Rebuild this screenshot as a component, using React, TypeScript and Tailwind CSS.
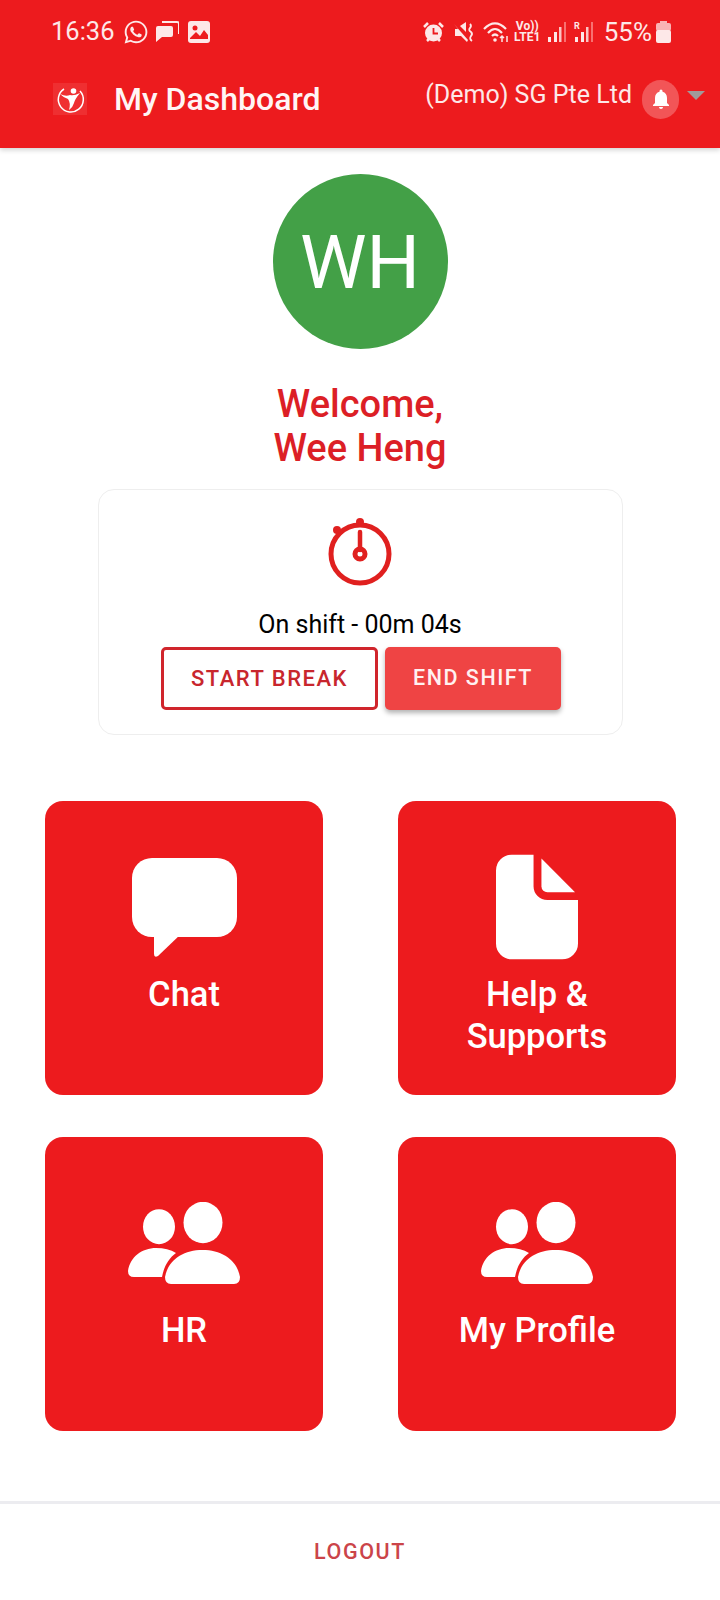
import { FaWhatsapp } from "react-icons/fa";

const roboto = "font-['Roboto',sans-serif]";

const ChatIcon = () => (
  <svg width="105" height="99" viewBox="0 0 105 99" fill="#fff">
    <rect width="105" height="79" rx="20" />
    <path d="M22 75V96q0 4 4 2L50 75Z" />
  </svg>
);

const DocIcon = () => (
  <svg width="82" height="106" viewBox="0 0 83 106" fill="#fff">
    <path d="M16 0H38V32a14 14 0 0 0 14 14H83V90a16 16 0 0 1-16 16H16a16 16 0 0 1-16-16V16A16 16 0 0 1 16 0Z" />
    <path d="M46 4L80 38H52a6 6 0 0 1-6-6Z" />
  </svg>
);

const PeopleIcon = () => (
  <svg width="112" height="82" viewBox="0 0 112 82" fill="#fff">
    <ellipse cx="31" cy="24.7" rx="16" ry="17.5" />
    <ellipse cx="75" cy="20.5" rx="19.5" ry="20.7" />
    <path d="M37 75C40 58 55 48 74.500 48S109 58 112 75Q112 82 106 82H43Q37 82 37 75Z" />
    <path d="M0 69C2 55 14 46 28 46Q40 46 48 51C41 56 36 64 34 75H6Q0 75 0 69Z" />
  </svg>
);

const Stopwatch = () => (
  <svg width="70" height="72" viewBox="0 0 70 72" fill="none" stroke="#e0201f">
    <circle cx="35" cy="38" r="29" strokeWidth="5" />
    <circle cx="35" cy="6" r="4" fill="#e0201f" stroke="none" />
    <circle cx="12" cy="14" r="4" fill="#e0201f" stroke="none" />
    <path d="M35 16V34" strokeWidth="4.500" strokeLinecap="round" />
    <circle cx="35" cy="38" r="5" strokeWidth="5" />
  </svg>
);

const Logo = () => (
  <div className="w-[34px] h-[32px] bg-[#ef2f31] flex items-center justify-center">
    <svg width="30" height="30" viewBox="0 0 30 30" fill="none" stroke="#fff">
      <path d="M9 5A12.500 12.500 0 1 0 25 7" strokeWidth="1.500" />
      <circle cx="18.500" cy="7" r="2.800" fill="#fff" stroke="none" />
      <path d="M5 10Q11 13 15 11Q19 12 25 9Q20 15 19 19Q18 23 14 26Q16 19 13 15Q9 14 5 10Z" fill="#fff" stroke="none" />
    </svg>
  </div>
);

const StatusLeft = () => (
  <div className="flex items-center">
    <span className="text-[25.500px] leading-none text-[#fde8e8] w-[72px]">16:36</span>
    <FaWhatsapp className="text-[#fde8e8] w-[26px] h-[26px]" />
    <svg className="ml-[7px]" width="23" height="22" viewBox="0 0 23 22" fill="#fde8e8">
      <path d="M2 5H15Q17 5 17 7V14Q17 16 15 16H6L0 21V7Q0 5 2 5Z" />
      <path d="M6 1H21Q23 1 23 3V13" fill="none" stroke="#fde8e8" strokeWidth="2" />
    </svg>
    <svg className="ml-[9px]" width="22" height="22" viewBox="0 0 22 22">
      <rect width="22" height="22" rx="3" fill="#fde8e8" />
      <circle cx="7" cy="7" r="2.500" fill="#ed1b1e" />
      <path d="M2 17L8 11L12 15L16 9L20 14V18H2Z" fill="#ed1b1e" />
    </svg>
  </div>
);

const Signal = ({ roaming }: { roaming?: boolean }) => (
  <svg width="21" height="22" viewBox="0 0 21 22">
    {roaming && <text x="1" y="8" fontSize="9" fontWeight="700" fill="#fde8e8" fontFamily="Roboto">R</text>}
    <rect x="2" y="16" width="3" height="5" fill="#fde8e8" />
    <rect x="8" y="11" width="3" height="10" fill="#fde8e8" />
    <rect x="13" y="6" width="2.500" height="15" fill="#fbc4c4" />
    <rect x="18" y="1" width="2" height="20" fill="#f87171" />
  </svg>
);

const StatusRight = () => (
  <div className="flex items-center text-[#fde8e8]">
    <svg width="21" height="22" viewBox="0 0 21 22">
      <circle cx="10.500" cy="12" r="8.500" fill="#fde8e8" />
      <path d="M1 6L5 2M20 6L16 2M4 20L6 18M17 20L15 18" stroke="#fde8e8" strokeWidth="2.500" />
      <path d="M10.500 7V12.500H15" fill="none" stroke="#ed1b1e" strokeWidth="1.800" />
    </svg>
    <svg className="ml-[9px]" width="22" height="22" viewBox="0 0 22 22" fill="#fde8e8">
      <path d="M1 3L15 19L14 21L8 15H2V8H5Z" />
      <path d="M7 5L13 1V11Z" />
      <path d="M17 3Q19 5 17 7Q15 9 18 11Q20 13 18 15Q16 18 19 20" fill="none" stroke="#fde8e8" strokeWidth="1.800" />
    </svg>
    <svg className="ml-[8px]" width="28" height="22" viewBox="0 0 28 22" fill="none" stroke="#fde8e8" strokeWidth="2.200">
      <path d="M1 8Q12 -3 23 8" />
      <path d="M5 12Q12 4 19 12" />
      <path d="M9 15Q12 12 15 15" />
      <circle cx="12" cy="19" r="1.800" fill="#fde8e8" stroke="none" />
      <path d="M19 21V15M17 17L19 15L21 17M24 15V21" strokeWidth="1.500" />
    </svg>
    <div className="ml-[3px] w-[27px] flex flex-col items-center text-[12px] leading-[11px] font-bold">
      <span>Vo))</span>
      <span>LTE1</span>
    </div>
    <div className="ml-[5px]"><Signal /></div>
    <div className="ml-[6px]"><Signal roaming /></div>
    <span className="ml-[10px] text-[26px] leading-none">55%</span>
    <svg className="ml-[4px]" width="15" height="22" viewBox="0 0 15 22">
      <rect x="4" y="0" width="7" height="3" fill="#f9b4b4" />
      <rect x="0" y="2" width="15" height="8" rx="2" fill="#f9b4b4" />
      <rect x="0" y="9" width="15" height="13" rx="2" fill="#fde8e8" />
    </svg>
  </div>
);

const Tile = ({ icon, label }: { icon: React.ReactNode; label: React.ReactNode }) => (
  <div className="h-[294px] rounded-[18px] bg-[#ed1b1e] flex flex-col items-center pt-[40px]">
    <div className="h-[132px] flex items-center justify-center">{icon}</div>
    <p className="text-[34.500px] leading-[42px] font-medium text-white text-center">{label}</p>
  </div>
);

export default function App() {
  return (
    <div className={`${roboto} w-full h-[1600px] bg-white flex flex-col`}>
      {/* Header */}
      <header className="h-[148px] bg-[#ed1b1e] shadow-[0_2px_5px_rgba(0,0,0,0.18)]">
        <div className="h-[64px] flex items-center justify-between pl-[51px] pr-[49px]">
          <StatusLeft />
          <StatusRight />
        </div>
        <div className="h-[70px] flex items-center justify-between pl-[53px] pr-[15px]">
          <div className="flex items-center">
            <Logo />
            <span className="ml-[27px] text-[32px] leading-none font-medium text-[#fff5f5]">My Dashboard</span>
          </div>
          <div className="flex items-center">
            <span className="text-[25px] leading-none text-[#fde8e8] mb-[10px]">(Demo) SG Pte Ltd</span>
            <div className="ml-[10px] w-[37px] h-[39px] rounded-full bg-[#f25557] flex items-center justify-center">
              <svg width="24" height="26" viewBox="0 0 24 24" fill="#fff">
                <path d="M12 22c1.100 0 2-.9 2-2h-4c0 1.100.9 2 2 2zm6-6v-5c0-3.100-1.600-5.600-4.500-6.300V4a1.500 1.500 0 0 0-3 0v.7C7.600 5.400 6 7.900 6 11v5l-2 2v1h16v-1l-2-2z" />
              </svg>
            </div>
            <div className="ml-[8px] mb-[8px] w-0 h-0 border-x-[9px] border-x-transparent border-t-[9px] border-t-[#a19a9a]" />
          </div>
        </div>
      </header>

      {/* Welcome */}
      <div className="mt-[26px] flex flex-col items-center">
        <div className="w-[175px] h-[175px] rounded-full bg-[#43a047] flex items-center justify-center text-[75px] leading-none text-white pt-[2px]">
          WH
        </div>
        <h1 className="mt-[33px] text-[38px] leading-[44px] font-medium text-[#dc1f26] text-center">
          Welcome,
          <br />
          Wee Heng
        </h1>
      </div>

      {/* Shift card */}
      <div className="mt-[19px] mx-auto w-[525px] h-[246px] rounded-[16px] border border-[#eeeeee] flex flex-col items-center pt-[26px]">
        <Stopwatch />
        <p className="mt-[21px] text-[25px] leading-[32px] text-black">On shift - 00m 04s</p>
        <div className="mt-[6px] ml-[2px] flex gap-[7px]">
          <button className="w-[217px] h-[63px] rounded-[5px] border-[3px] border-[#d0252c] text-[22px] font-medium tracking-[1.500px] text-[#c8262d]">
            START BREAK
          </button>
          <button className="w-[176px] h-[63px] rounded-[5px] bg-[#ef4444] text-[21.500px] font-medium tracking-[1.500px] text-[#fff1f1] shadow-[0_3px_5px_rgba(0,0,0,0.3)]">
            END SHIFT
          </button>
        </div>
      </div>

      {/* Tiles */}
      <div className="mt-[66px] pl-[45px] pr-[44px] grid grid-cols-2 gap-x-[75px] gap-y-[42px]">
        <Tile icon={<ChatIcon />} label="Chat" />
        <Tile icon={<DocIcon />} label={<>Help &amp;<br />Supports</>} />
        <Tile icon={<PeopleIcon />} label="HR" />
        <Tile icon={<PeopleIcon />} label="My Profile" />
      </div>

      {/* Footer */}
      <footer className="mt-[70px] flex-1 border-t-[3px] border-[#ececf0] flex items-center justify-center">
        <span className="text-[21.500px] font-medium tracking-[1.600px] text-[#cb4449]">LOGOUT</span>
      </footer>
    </div>
  );
}
